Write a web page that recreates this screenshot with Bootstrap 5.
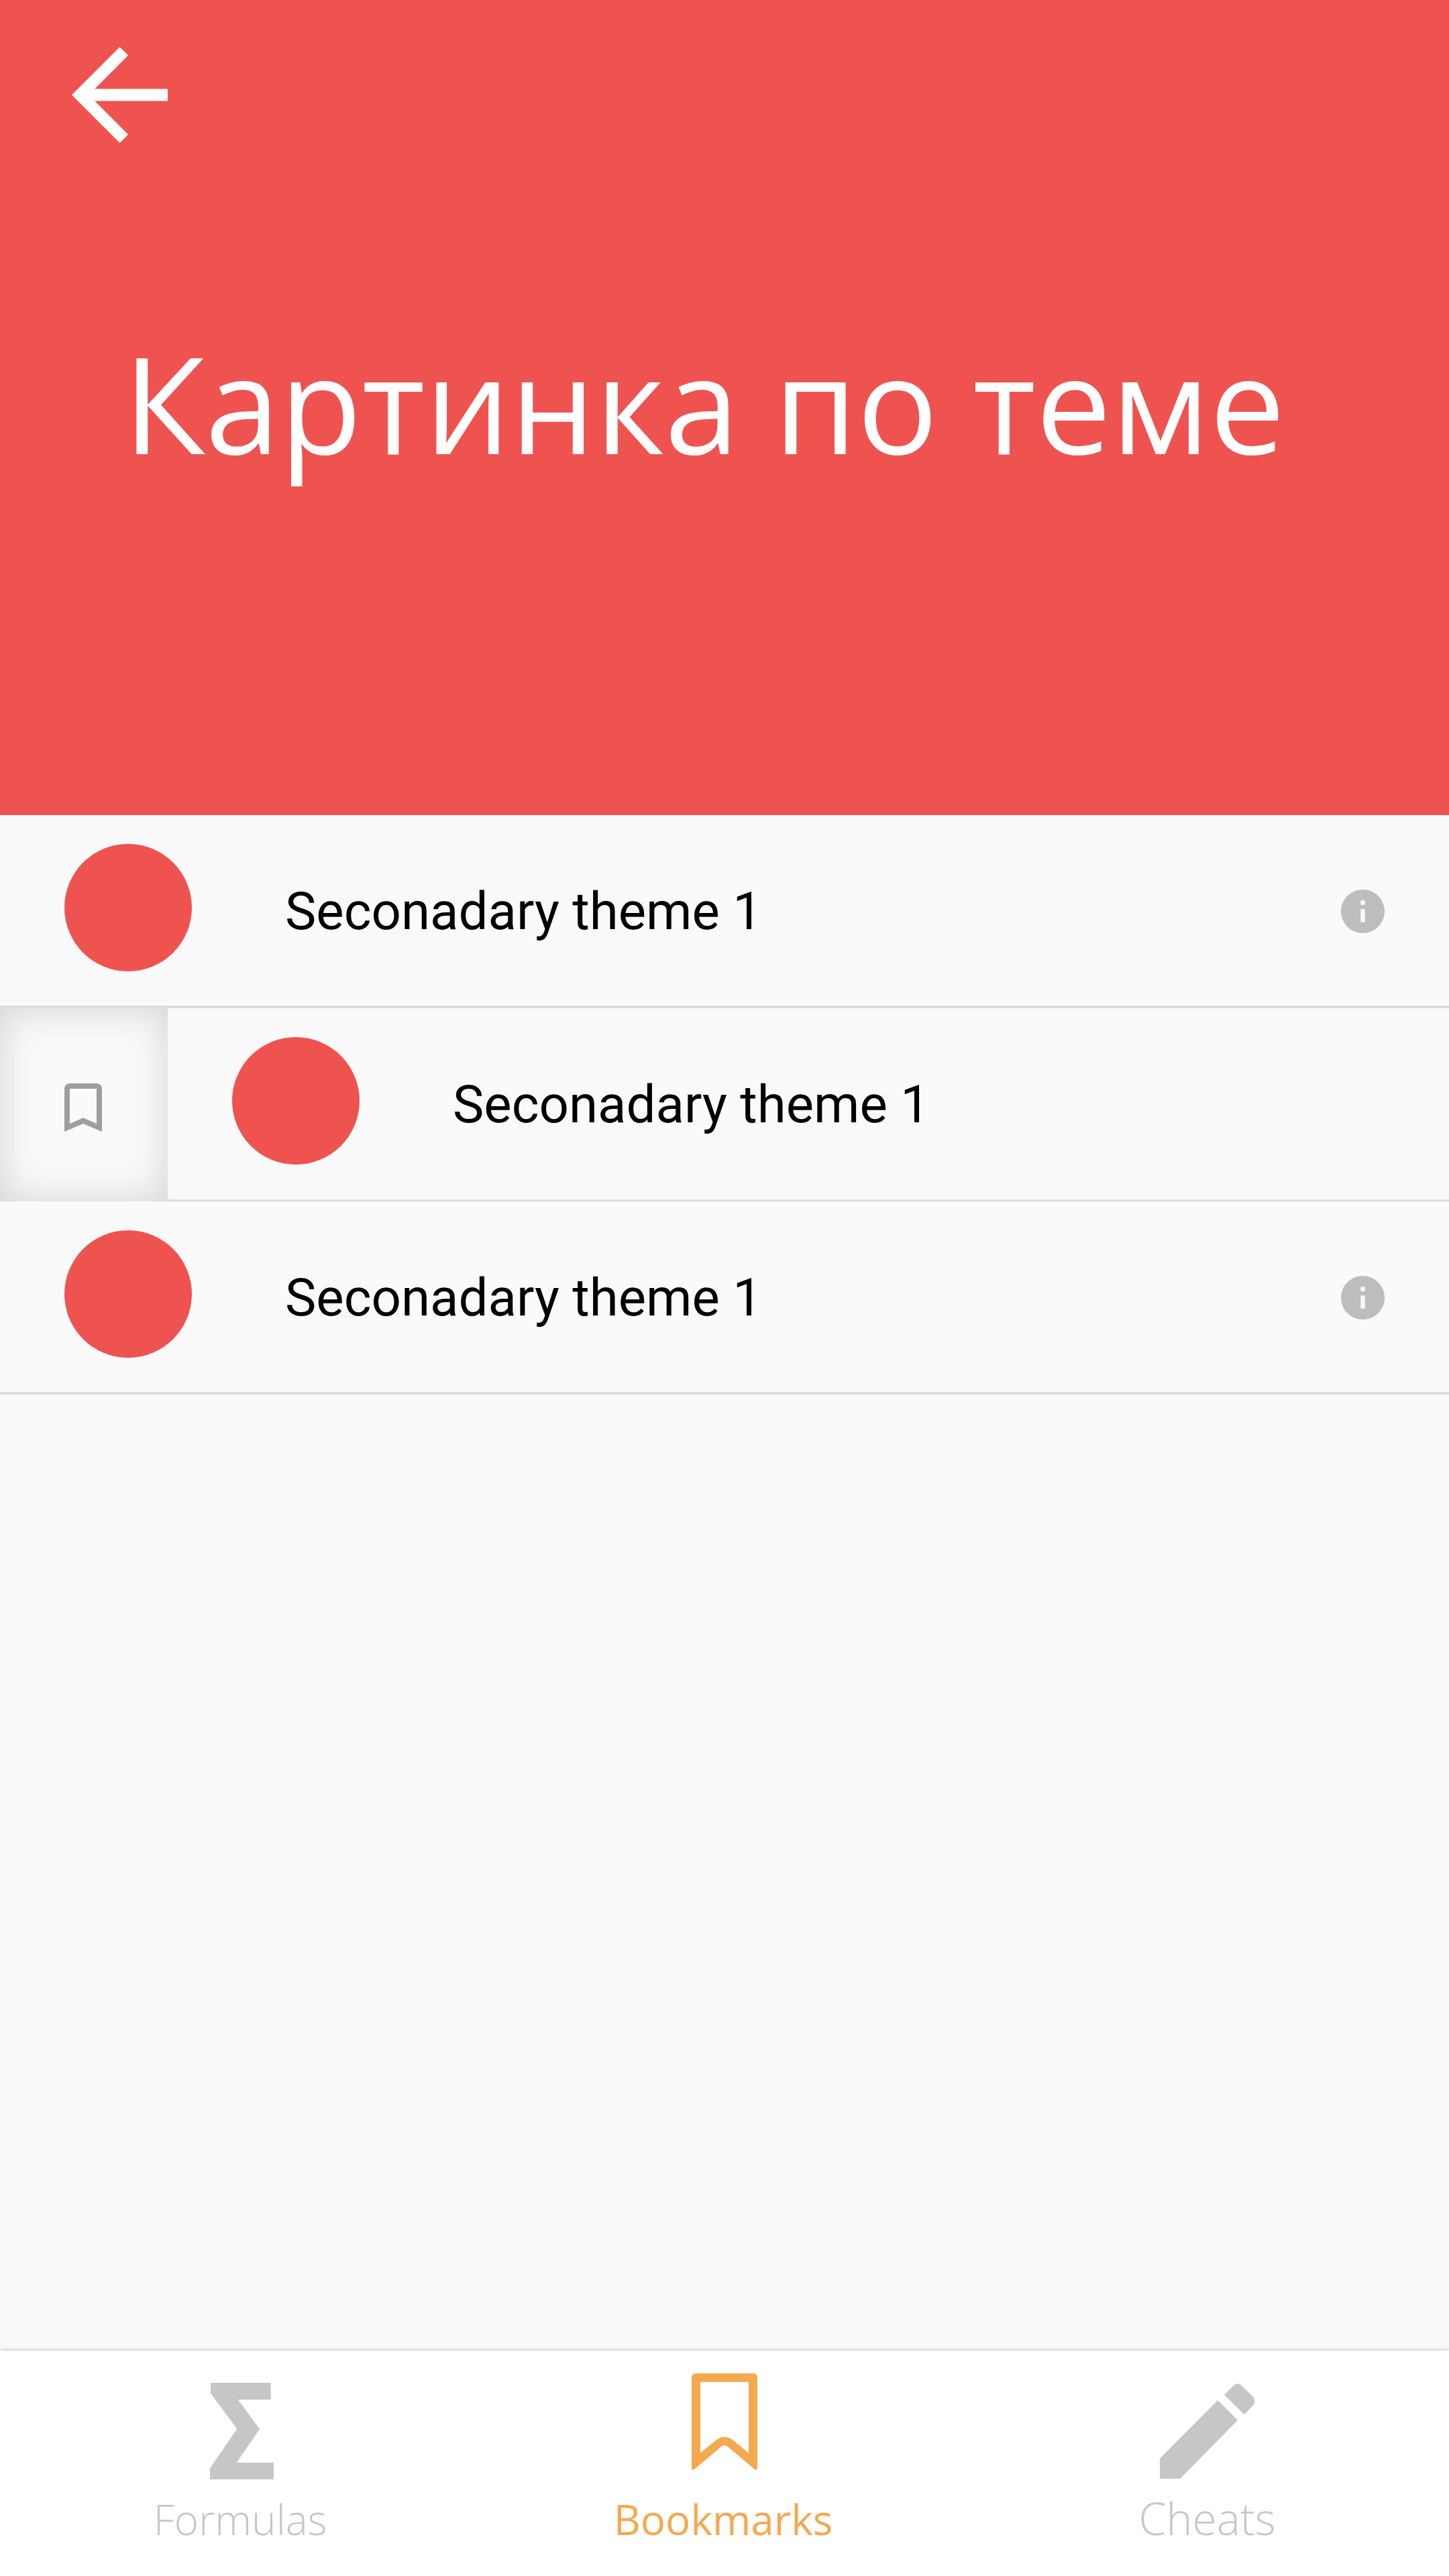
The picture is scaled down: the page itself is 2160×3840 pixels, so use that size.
<!DOCTYPE html>
<html lang="ru">
<head>
<meta charset="utf-8">
<meta name="viewport" content="width=device-width, initial-scale=1">
<title>Bookmarks</title>
<link href="https://cdn.jsdelivr.net/npm/bootstrap@5.3.0/dist/css/bootstrap.min.css" rel="stylesheet">
<style>
  body { background: #fafafa; color: #000; font-family: Roboto, sans-serif; overflow: hidden; }
  svg { display: block; flex: none; }
  .screen { height: 3840px; }
  .hero { height: 1215px; background: #ef5350; color: #fff; padding-top: 70px; }
  .back { margin-left: 107px; width: 143px; }
  .hero-title { font: 400 200px/200px "Open Sans", sans-serif; margin: 287px 0 0 184px; white-space: nowrap; }
  .theme-row { height: 288px; font-size: 78px; line-height: 95px; border-bottom: 4px solid #dcdcdc; }
  .theme-row.swiped { border-bottom: 0; }
  .theme-body { height: 100%; padding-left: 96px; padding-right: 96px; }
  .swiped .theme-body { border-bottom: 3px solid #dcdcdc; }
  .dot { width: 190px; height: 190px; background: #ef5350; margin: 43px 139px 0 0; flex: none; }
  .theme-name { padding-top: 96px; white-space: nowrap; }
  .info { margin-top: 111px; }
  .action { width: 250px; padding: 112px 0 0 96px; box-shadow: inset 0 0 60px rgba(0,0,0,.16); }
  .tabs { height: 336px; background: #fff; box-shadow: 0 0 6px rgba(0,0,0,.3); font: 300 62px/80px "Open Sans", sans-serif; color: #c6c6c6; }
  .tab-icon { height: 211px; }
  .tab-icon.sigma, .tab-icon.pencil { padding-top: 48px; }
  .tab-icon.ribbon { padding-top: 34px; }
  .tab-on { color: #f4a950; font-weight: 400; }
  .tab-label { padding-right: 4px; }
  .tab-large { font-size: 66px; line-height: 77px; padding-right: 1px; }
</style>
<script src="https://cdn.jsdelivr.net/npm/bootstrap@5.3.0/dist/js/bootstrap.bundle.min.js"></script>
</head>
<body>
<div class="screen d-flex flex-column">
  <header class="hero">
    <a class="back d-block text-white" href="#" aria-label="Back">
      <svg width="143" height="143" viewBox="4 4 16 16" fill="currentColor"><path d="M20 11H7.83l5.59-5.59L12 4l-8 8 8 8 1.41-1.41L7.83 13H20z"/></svg>
    </a>
    <h1 class="hero-title">Картинка по теме</h1>
  </header>

  <main class="flex-grow-1">
    <div class="theme-row">
      <div class="theme-body d-flex align-items-start">
        <span class="dot rounded-circle"></span>
        <span class="theme-name flex-grow-1">Seconadary theme 1</span>
        <svg class="info" width="65" height="65" viewBox="2 2 20 20" fill="#bdbdbd"><path d="M12 2C6.48 2 2 6.48 2 12s4.48 10 10 10 10-4.48 10-10S17.52 2 12 2zm1 15h-2v-6h2zm0-8h-2V7h2z"/></svg>
      </div>
    </div>
    <div class="theme-row swiped d-flex">
      <div class="action">
        <svg width="56" height="72" viewBox="5 3 14 18" fill="#9e9e9e"><path d="M17 3H7c-1.1 0-2 .9-2 2v16l7-3 7 3V5c0-1.1-.9-2-2-2zm0 15l-5-2.18L7 18V5h10z"/></svg>
      </div>
      <div class="theme-body d-flex align-items-start flex-grow-1">
        <span class="dot rounded-circle"></span>
        <span class="theme-name flex-grow-1">Seconadary theme 1</span>
      </div>
    </div>
    <div class="theme-row">
      <div class="theme-body d-flex align-items-start">
        <span class="dot rounded-circle"></span>
        <span class="theme-name flex-grow-1">Seconadary theme 1</span>
        <svg class="info" width="65" height="65" viewBox="2 2 20 20" fill="#bdbdbd"><path d="M12 2C6.48 2 2 6.48 2 12s4.48 10 10 10 10-4.48 10-10S17.52 2 12 2zm1 15h-2v-6h2zm0-8h-2V7h2z"/></svg>
      </div>
    </div>
  </main>

  <nav class="tabs row g-0 text-center">
    <div class="col-4">
      <div class="tab-icon sigma d-flex justify-content-center align-items-start">
        <svg width="95" height="144" viewBox="339 216 285 432" fill="currentColor"><path d="M342 216H611V291H464L561 422 458 573H624V648H339V598L460 422 342 263z"/></svg>
      </div>
      <div class="tab-label">Formulas</div>
    </div>
    <div class="col-4 tab-on">
      <div class="tab-icon ribbon d-flex justify-content-center align-items-start">
        <svg width="98" height="144" viewBox="453 174 294 432" fill="currentColor" fill-rule="evenodd"><path d="M470 174H730Q747 176 747 191V599Q745 608 736 604L614 501Q600 491 586 501L466 602Q456 609 453 600V191Q455 176 470 174zM492 212V530L564 471Q580 458 600 458T636 471L708 530V212z"/></svg>
      </div>
      <div class="tab-label">Bookmarks</div>
    </div>
    <div class="col-4">
      <div class="tab-icon pencil d-flex justify-content-center align-items-start">
        <svg width="142" height="144" viewBox="205 216 426 432" fill="currentColor"><path d="M205 554L464 294 553 383 295 645H205zM493 270L534 229Q551 212 569 227L622 280Q636 296 624 314L583 358z"/></svg>
      </div>
      <div class="tab-label tab-large">Cheats</div>
    </div>
  </nav>
</div>
</body>
</html>
